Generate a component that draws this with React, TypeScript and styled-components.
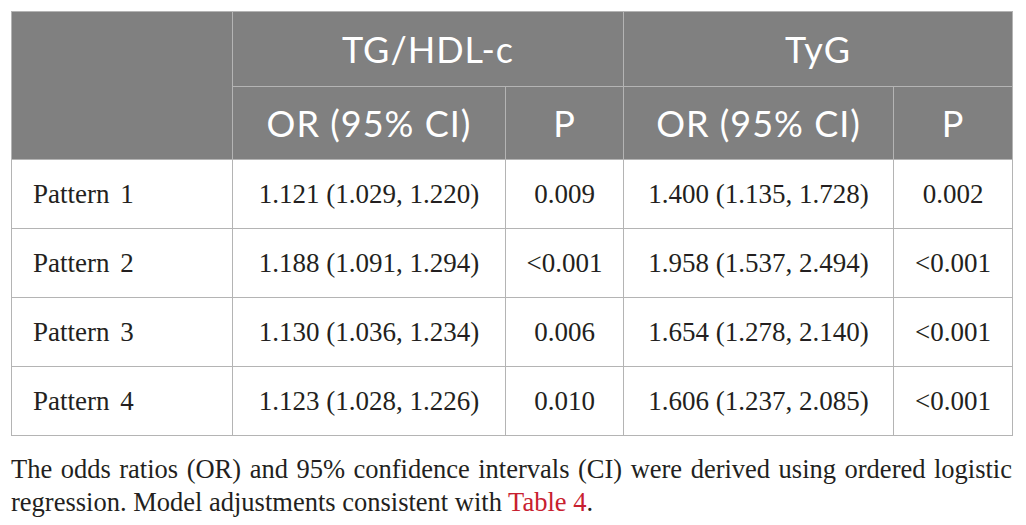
import React from "react";
import styled, { createGlobalStyle } from "styled-components";

const GlobalStyle = createGlobalStyle`
  html, body {
    margin: 0;
    padding: 0;
    background: #ffffff;
  }
`;

const rows = [
  ["Pattern 1", "1.121 (1.029, 1.220)", "0.009", "1.400 (1.135, 1.728)", "0.002"],
  ["Pattern 2", "1.188 (1.091, 1.294)", "<0.001", "1.958 (1.537, 2.494)", "<0.001"],
  ["Pattern 3", "1.130 (1.036, 1.234)", "0.006", "1.654 (1.278, 2.140)", "<0.001"],
  ["Pattern 4", "1.123 (1.028, 1.226)", "0.010", "1.606 (1.237, 2.085)", "<0.001"],
];

const App = () => {
  return (
    <Page>
      <GlobalStyle />
      <Table>
        <colgroup>
          <col style={{ width: 221 }} />
          <col style={{ width: 273 }} />
          <col style={{ width: 118 }} />
          <col style={{ width: 270 }} />
          <col style={{ width: 119 }} />
        </colgroup>
        <thead>
          <HeadRow $height={75}>
            <HeadCell rowSpan={2} />
            <HeadCell colSpan={2}>TG/HDL-c</HeadCell>
            <HeadCell colSpan={2}>TyG</HeadCell>
          </HeadRow>
          <HeadRow $height={73}>
            <HeadCell>OR (95% CI)</HeadCell>
            <HeadCell>P</HeadCell>
            <HeadCell>OR (95% CI)</HeadCell>
            <HeadCell>P</HeadCell>
          </HeadRow>
        </thead>
        <tbody>
          {rows.map((r) => (
            <BodyRow key={r[0]}>
              {r.map((c, i) => (
                <Cell key={i} $left={i === 0}>
                  {c}
                </Cell>
              ))}
            </BodyRow>
          ))}
        </tbody>
      </Table>
      <Note>
        The odds ratios (OR) and 95% confidence intervals (CI) were derived using ordered logistic
        regression. Model adjustments consistent with <NoteLink href="#">Table 4</NoteLink>.
      </Note>
    </Page>
  );
};

const Page = styled.div`
  padding: 11px 14px 0 11px;
  width: 1001px;
`;

const Table = styled.table`
  border-collapse: collapse;
  table-layout: fixed;
  width: 1001px;
`;

const HeadRow = styled.tr<{ $height: number }>`
  height: ${({ $height }) => $height}px;
`;

const HeadCell = styled.th`
  background: #808080;
  color: #ffffff;
  border: 1px solid #b4b4b4;
  font-family: Lato, "Open Sans", sans-serif;
  font-weight: 400;
  font-size: 36px;
  letter-spacing: 1px;
  text-align: center;
  vertical-align: middle;
  padding: 0;
`;

const BodyRow = styled.tr`
  height: 69px;
`;

const Cell = styled.td<{ $left?: boolean }>`
  border: 1px solid #b4b4b4;
  font-family: "Liberation Serif", "Times New Roman", serif;
  font-size: 27px;
  word-spacing: ${({ $left }) => ($left ? "4px" : "0")};
  color: #231f20;
  text-align: ${({ $left }) => ($left ? "left" : "center")};
  padding: 0 ${({ $left }) => ($left ? "21px" : "0")};
  vertical-align: middle;
  white-space: nowrap;
`;

const Note = styled.p`
  margin: 17px 0 0;
  font-family: "Liberation Serif", "Times New Roman", serif;
  font-size: 26.5px;
  line-height: 33px;
  color: #231f20;
  text-align: justify;
`;

const NoteLink = styled.a`
  color: #c8202f;
  text-decoration: none;
`;

export default App;
